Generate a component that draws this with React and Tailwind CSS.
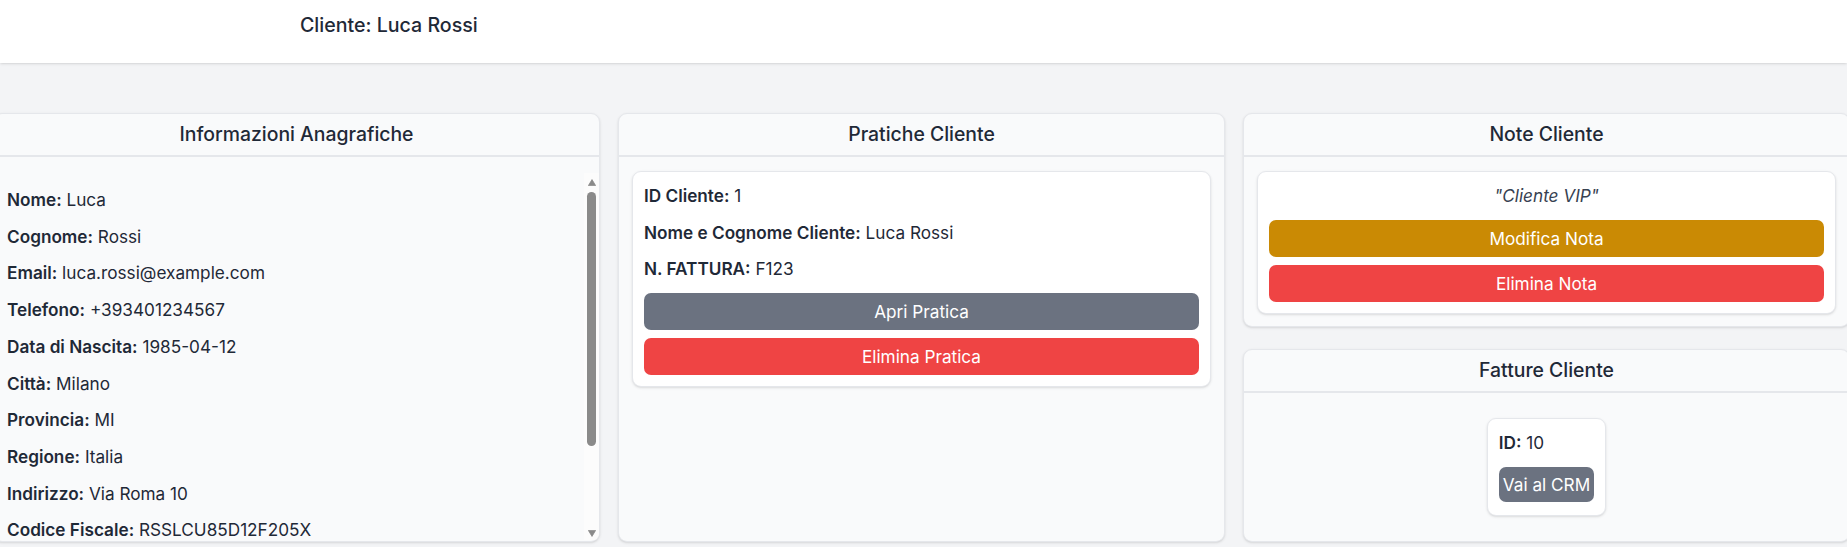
import React from "react";

const anagrafica = [
  { label: "Nome", value: "Luca" },
  { label: "Cognome", value: "Rossi" },
  { label: "Email", value: "luca.rossi@example.com" },
  { label: "Telefono", value: "+393401234567" },
  { label: "Data di Nascita", value: "1985-04-12" },
  { label: "Città", value: "Milano" },
  { label: "Provincia", value: "MI" },
  { label: "Regione", value: "Italia" },
  { label: "Indirizzo", value: "Via Roma 10" },
  { label: "Codice Fiscale", value: "RSSLCU85D12F205X" },
];

function Field({ label, value, className = "mb-[10.3px]" }) {
  return (
    <p className={`leading-[26.4px] ${className}`}>
      <span className="font-semibold text-[#1f2937]">{label}:</span>{" "}
      <span className="text-[#1f2937]">{value}</span>
    </p>
  );
}

function Panel({ title, className = "", children }) {
  return (
    <div
      className={`flex flex-col bg-[#f9fafb] border border-[#e5e7eb] rounded-[9px] shadow-sm overflow-hidden ${className}`}
    >
      <div className="h-[43px] shrink-0 flex items-center justify-center border-b-2 border-[#e5e7eb]">
        <h3 className="text-[19.4px] font-medium text-[#1f2937]">{title}</h3>
      </div>
      {children}
    </div>
  );
}

// scrollbar drawn over the list (the headless browser hides native ones)
function FakeScrollbar() {
  return (
    <div className="absolute top-0 right-0 h-full w-[15px] bg-[#fcfcfc] flex flex-col items-center">
      <svg width="8" height="7" viewBox="0 0 8 7" className="mt-[6px]">
        <path d="M4 0.6 L7.6 6.6 H0.4 Z" fill="#8a8a8a" stroke="#8a8a8a" strokeWidth="0.8" strokeLinejoin="round" />
      </svg>
      <div className="mt-[6px] h-[254px] w-[9px] rounded-full bg-[#8a8a8a]" />
      <svg width="8" height="7" viewBox="0 0 8 7" className="mt-auto mb-[3px]">
        <path d="M4 6.4 L7.6 0.4 H0.4 Z" fill="#8a8a8a" stroke="#8a8a8a" strokeWidth="0.8" strokeLinejoin="round" />
      </svg>
    </div>
  );
}

export default function App() {
  return (
    <div className="h-screen overflow-hidden bg-[#f3f4f6] font-[family-name:Inter,sans-serif] text-[17.2px] text-[#1f2937]">
      {/* Header */}
      <header className="relative z-10 h-[63px] bg-white shadow-sm">
        <div className="max-w-[1247px] mx-auto pt-[10px]">
          <h2 className="text-[19.6px] leading-[30px] font-medium text-[#1f2937]">
            Cliente: Luca Rossi
          </h2>
        </div>
      </header>

      <main className="pt-[50px]">
        <div className="grid grid-cols-3 gap-[18px] w-[1857px] -ml-[7px]">
          {/* Informazioni anagrafiche */}
          <Panel title="Informazioni Anagrafiche">
            <div className="relative mt-4 h-[367px]">
              <div className="h-full overflow-y-auto">
                <div className="px-[13px] pt-[14px] pb-[100px]">
                  {anagrafica.map((f) => (
                    <Field key={f.label} label={f.label} value={f.value} />
                  ))}
                </div>
              </div>
              <FakeScrollbar />
            </div>
          </Panel>

          {/* Pratiche */}
          <Panel title="Pratiche Cliente">
            <div className="pt-[14px] px-[13px]">
              <div className="bg-white border border-[#e5e7eb] rounded-[9px] shadow-sm p-[11px]">
                <Field label="ID Cliente" value="1" />
                <Field label="Nome e Cognome Cliente" value="Luca Rossi" />
                <Field label="N. FATTURA" value="F123" />
                <div className="flex flex-col gap-2">
                  <button className="w-full h-[37px] rounded-[7px] bg-[#6b7280] text-white">
                    Apri Pratica
                  </button>
                  <button className="w-full h-[37px] rounded-[7px] bg-[#ef4444] text-white">
                    Elimina Pratica
                  </button>
                </div>
              </div>
            </div>
          </Panel>

          {/* Note e fatture */}
          <div className="flex flex-col gap-[22px]">
            <Panel title="Note Cliente">
              <div className="pt-[14px] px-[13px] pb-[12px]">
                <div className="bg-white border border-[#e5e7eb] rounded-[9px] shadow-sm p-[11px]">
                  <p className="leading-[26.4px] mb-[10.6px] text-center italic text-[#374151]">
                    "Cliente VIP"
                  </p>
                  <div className="flex flex-col gap-2">
                    <button className="w-full h-[37px] rounded-[7px] bg-[#ca8a04] text-white">
                      Modifica Nota
                    </button>
                    <button className="w-full h-[37px] rounded-[7px] bg-[#ef4444] text-white">
                      Elimina Nota
                    </button>
                  </div>
                </div>
              </div>
            </Panel>

            <Panel title="Fatture Cliente">
              <div className="flex justify-center py-[25px]">
                <div className="bg-white border border-[#e5e7eb] rounded-[9px] shadow-sm px-[11px] pt-[11px] pb-[13px]">
                  <Field label="ID" value="10" className="mb-[10.6px]" />
                  <button className="h-[35px] px-[4px] rounded-[7px] bg-[#6b7280] text-white">
                    Vai al CRM
                  </button>
                </div>
              </div>
            </Panel>
          </div>
        </div>
      </main>
    </div>
  );
}
